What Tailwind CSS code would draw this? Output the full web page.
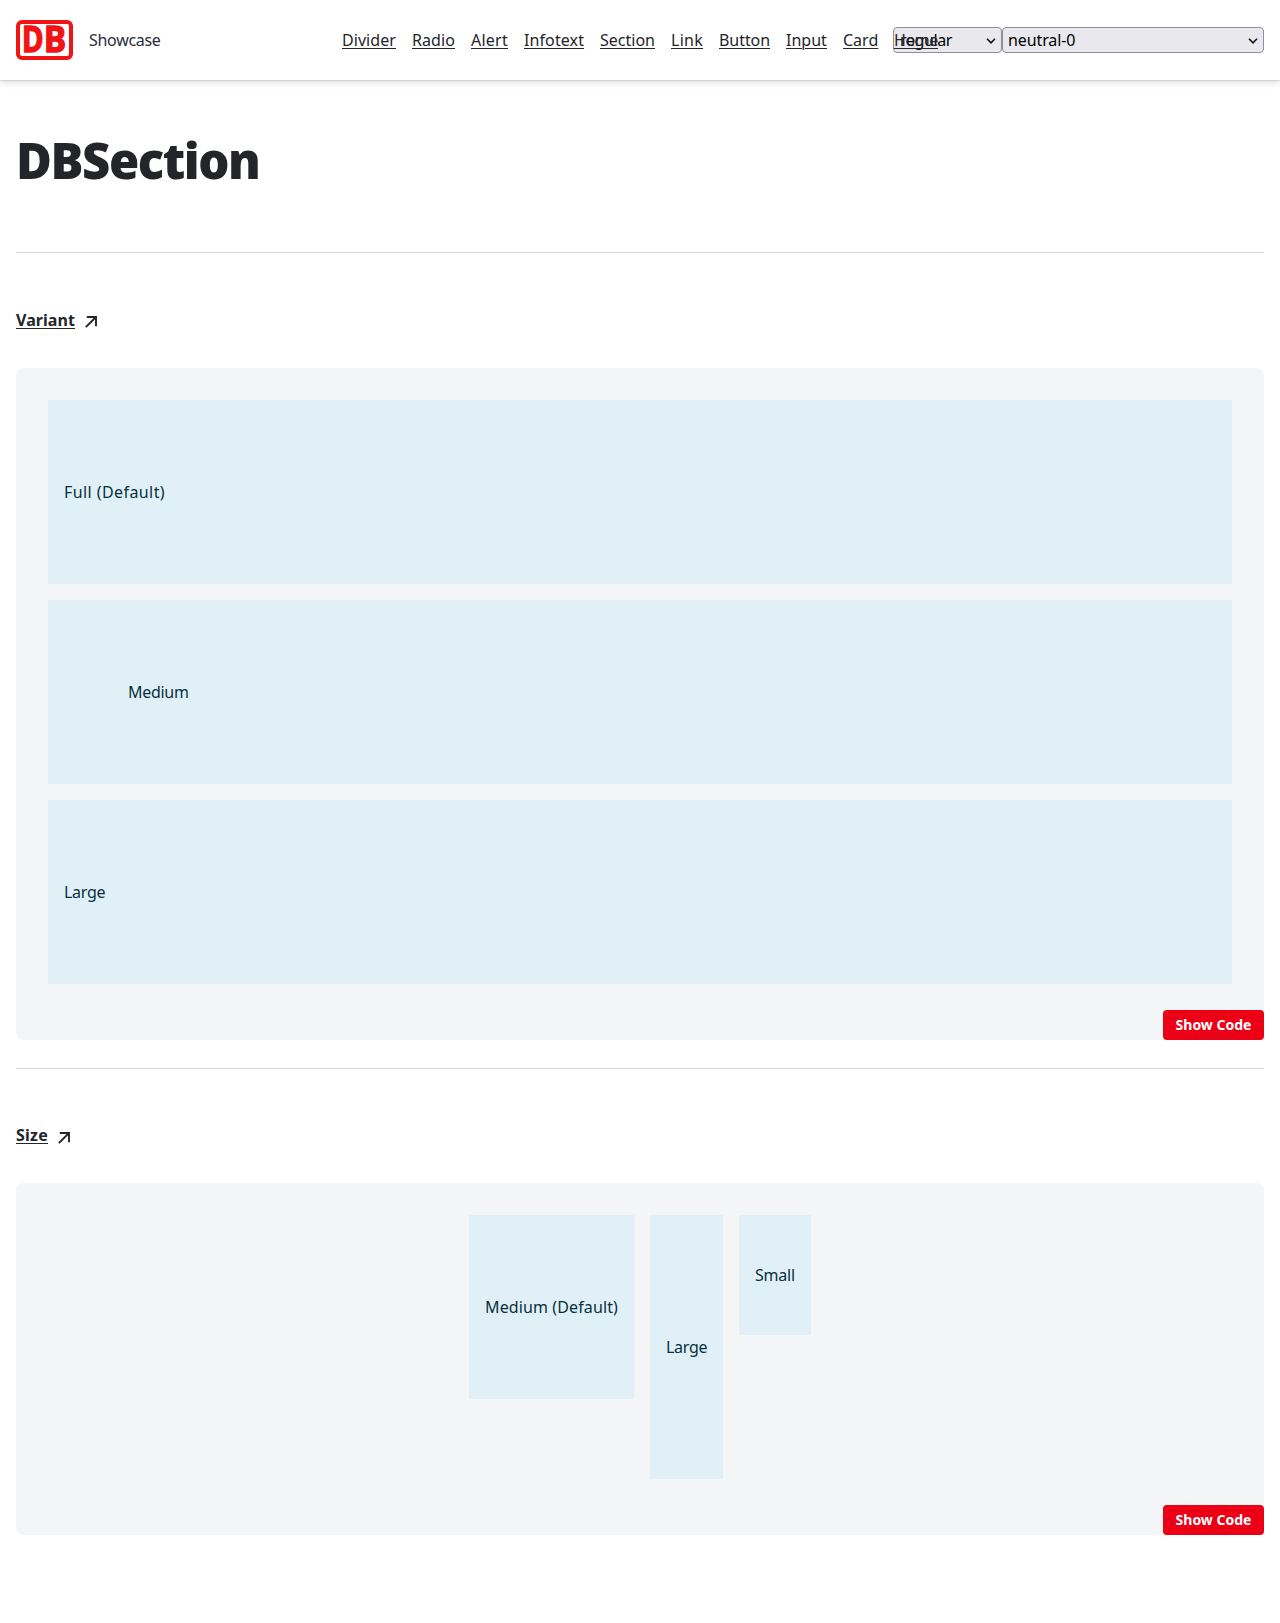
<!DOCTYPE html>
<html lang="en">
<head>
<meta charset="utf-8">
<title>DBSection</title>
<script src="https://cdn.jsdelivr.net/npm/@tailwindcss/browser@4"></script>
</head>
<body class="bg-white font-['Noto_Sans','Open_Sans',sans-serif] text-base leading-6 text-[#282d37]">
<header class="flex h-20 items-center px-4 shadow-[0_0_2px_rgba(0,0,0,0.3),0_2px_8px_rgba(0,0,0,0.14)]">
  <svg class="h-10 w-[57px] shrink-0" viewBox="0 0 57 40" font-family="'Noto Sans',sans-serif" font-weight="700" font-size="35">
    <rect x="2" y="2" width="53" height="36" rx="4" fill="none" stroke="#f01414" stroke-width="4"/>
    <text transform="translate(5.9 32.4) scale(.84 1)" fill="#f01414" stroke="#f01414" stroke-width="1.3">D</text>
    <text transform="translate(27.9 32.4) scale(.95 1)" fill="#f01414" stroke="#f01414" stroke-width="1.3">B</text>
  </svg>
  <span class="ml-4 w-[253px] shrink-0 tracking-[-0.3px]">Showcase</span>
  <nav class="flex w-[551px] shrink-0 gap-4 text-[#232529] underline decoration-1 underline-offset-2">
    <a class="w-[54px] shrink-0 tracking-[0.06px]">Divider</a>
    <a class="w-[43px] shrink-0 tracking-[0.08px]">Radio</a>
    <a class="w-[37px] shrink-0 tracking-[0.24px]">Alert</a>
    <a class="w-[60px] shrink-0 tracking-[0.1px]">Infotext</a>
    <a class="w-[55px] shrink-0">Section</a>
    <a class="w-[32px] shrink-0 tracking-[0.25px]">Link</a>
    <a class="w-[51px] shrink-0 tracking-[-0.06px]">Button</a>
    <a class="w-[41px] shrink-0">Input</a>
    <a class="w-[35px] shrink-0">Card</a>
    <a class="relative z-10 w-[44px] shrink-0 tracking-[-0.4px]">Home</a>
  </nav>
  <div class="flex flex-1 text-black">
    <div class="flex h-[26px] w-[109px] items-center justify-between rounded-[4px] border border-[#8f8f9d] bg-[#e9e9ed] pr-[5px] pl-[6px] tracking-[-0.4px]">regular
      <svg class="mt-px h-[6px] w-[10px]" viewBox="0 0 10 6" fill="none" stroke="#111" stroke-width="1.6"><path d="M1 .8l4 4 4-4"/></svg>
    </div>
    <div class="flex h-[26px] flex-1 items-center justify-between rounded-[4px] border border-[#8f8f9d] bg-[#e9e9ed] pr-[5px] pl-[5px] tracking-[-0.1px]">neutral-0
      <svg class="mt-px h-[6px] w-[10px]" viewBox="0 0 10 6" fill="none" stroke="#111" stroke-width="1.6"><path d="M1 .8l4 4 4-4"/></svg>
    </div>
  </div>
</header>
<main class="px-4">
  <h1 class="flex h-[172px] items-center pb-[12px] text-[49px] leading-[60px] font-black tracking-[-1.45px] text-[#232529]">DBSection</h1>
  <section class="border-t border-[#d7d7d7]">
    <a class="flex h-[115px] items-center pt-[18px] font-bold text-[#232529]"><span class="tracking-[0.06px] underline decoration-1 underline-offset-2">Variant</span>
      <svg class="mt-[4px] ml-[10px] size-3" viewBox="0 0 12 12" fill="none" stroke="#232529" stroke-width="1.9"><path d="M1.8 1H11v9.2M11 1L.8 11.2"/></svg></a>
    <div class="flex h-[672px] flex-col rounded-lg bg-[#f3f5f7]">
      <div class="flex flex-col gap-4 px-8 pt-8 text-[#06303f]">
        <div class="flex h-[184px] items-center bg-[#e1f0f7] px-4 tracking-[0.42px]">Full (Default)</div>
        <div class="flex h-[184px] items-center bg-[#e1f0f7] px-20 tracking-[-0.3px]">Medium</div>
        <div class="flex h-[184px] items-center bg-[#e1f0f7] px-4 tracking-[-0.3px]">Large</div>
      </div>
      <button class="mt-auto h-[30px] w-[101px] self-end rounded-[4px] bg-[#ec0016] text-sm font-bold text-white">Show Code</button>
    </div>
  </section>
  <section class="mt-7 border-t border-[#d7d7d7]">
    <a class="flex h-[114px] items-center pt-[18px] font-bold text-[#232529]"><span class="tracking-[0.24px] underline decoration-1 underline-offset-2">Size</span>
      <svg class="mt-[5px] ml-[10px] size-3" viewBox="0 0 12 12" fill="none" stroke="#232529" stroke-width="1.9"><path d="M1.8 1H11v9.2M11 1L.8 11.2"/></svg></a>
    <div class="flex h-[352px] flex-col rounded-lg bg-[#f3f5f7]">
      <div class="flex items-start justify-center gap-4 px-8 pt-8 text-[#06303f]">
        <div class="flex h-[184px] w-[165px] items-center bg-[#e1f0f7] px-4 tracking-[0.12px] whitespace-nowrap">Medium (Default)</div>
        <div class="flex h-[264px] w-[73px] items-center bg-[#e1f0f7] px-4 tracking-[-0.3px]">Large</div>
        <div class="flex h-[120px] w-[72px] items-center bg-[#e1f0f7] px-4 tracking-[-0.2px]">Small</div>
      </div>
      <button class="mt-auto h-[30px] w-[101px] self-end rounded-[4px] bg-[#ec0016] text-sm font-bold text-white">Show Code</button>
    </div>
  </section>
</main>
</body>
</html>
